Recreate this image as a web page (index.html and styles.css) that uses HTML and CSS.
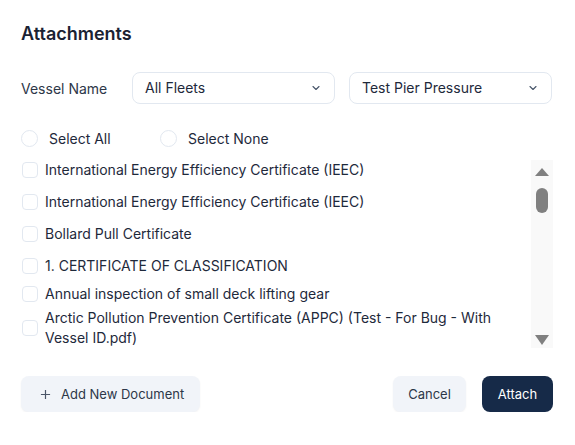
FILE: index.html
```html
<!DOCTYPE html>
<html lang="en">
<head>
  <meta charset="UTF-8" />
  <meta name="viewport" content="width=device-width, initial-scale=1.0">
  <title>Attachments</title>
  <link rel="stylesheet" href="styles.css">
</head>
<body>
  <div class="dialog">
    <h2 class="title">Attachments</h2>

    <div class="filter-row">
      <label class="filter-label">Vessel Name</label>
      <div class="select">
        <span>All Fleets</span>
        <svg class="chevron" viewBox="0 0 12 12"><path d="M3 4.5 6 7.5 9 4.5" /></svg>
      </div>
      <div class="select">
        <span>Test Pier Pressure</span>
        <svg class="chevron" viewBox="0 0 12 12"><path d="M3 4.5 6 7.5 9 4.5" /></svg>
      </div>
    </div>

    <div class="select-mode">
      <label class="radio"><span class="radio-dot"></span>Select All</label>
      <label class="radio"><span class="radio-dot"></span>Select None</label>
    </div>

    <div class="doc-list">
      <div class="doc-items">
        <label class="doc-row"><span class="box"></span><span>International Energy Efficiency Certificate (IEEC)</span></label>
        <label class="doc-row"><span class="box"></span><span>International Energy Efficiency Certificate (IEEC)</span></label>
        <label class="doc-row"><span class="box"></span><span>Bollard Pull Certificate</span></label>
        <label class="doc-row"><span class="box"></span><span>1. CERTIFICATE OF CLASSIFICATION</span></label>
        <label class="doc-row compact"><span class="box"></span><span>Annual inspection of small deck lifting gear</span></label>
        <label class="doc-row compact"><span class="box"></span><span>Arctic Pollution Prevention Certificate (APPC) (Test - For Bug - With Vessel ID.pdf)</span></label>
      </div>
      <div class="scrollbar">
        <span class="arrow up"></span>
        <span class="thumb"></span>
        <span class="track-fill"></span>
        <span class="arrow down"></span>
      </div>
    </div>

    <div class="actions">
      <button class="btn light add">
        <svg class="plus" viewBox="0 0 12 12"><path d="M6 1v10M1 6h10" /></svg>
        Add New Document
      </button>
      <div class="actions-right">
        <button class="btn light">Cancel</button>
        <button class="btn dark">Attach</button>
      </div>
    </div>
  </div>
</body>
</html>
```

FILE: styles.css
```css
* {
  margin: 0;
  padding: 0;
  box-sizing: border-box;
}

body {
  font-family: Inter, 'Noto Sans', sans-serif;
  background: #ffffff;
  color: #1e293b;
  font-size: 14px;
}

.dialog {
  width: 575px;
  padding: 22px 22px 0 21px;
}

.title {
  font-size: 18px;
  font-weight: 600;
  line-height: 24px;
  color: #1a2233;
  margin-bottom: 26px;
}

.filter-row {
  display: flex;
  align-items: center;
  gap: 14px;
}

.filter-label {
  width: 97px;
  color: #2d3748;
  font-size: 14px;
}

.select {
  width: 203px;
  height: 32px;
  border: 1px solid #e2e8f0;
  border-radius: 8px;
  display: flex;
  align-items: center;
  justify-content: space-between;
  padding: 0 12px 0 12px;
  color: #1e293b;
  line-height: 30px;
}

.chevron {
  width: 12px;
  height: 12px;
  fill: none;
  stroke: #475569;
  stroke-width: 1.1;
  stroke-linecap: round;
  stroke-linejoin: round;
}

.select-mode {
  display: flex;
  margin-top: 24px;
  height: 20px;
  align-items: center;
}

.radio {
  display: flex;
  align-items: center;
  gap: 11px;
  width: 139px;
  color: #1e293b;
}

.radio-dot {
  width: 17px;
  height: 17px;
  border: 1px solid #e2e8f0;
  border-radius: 50%;
}

.doc-list {
  display: flex;
  margin-top: 6px;
  height: 196px;
  overflow: hidden;
}

.doc-items {
  flex: 1;
}

.doc-row {
  display: flex;
  align-items: center;
  gap: 7px;
  padding: 6px 0;
  line-height: 20px;
  color: #1e293b;
}

.doc-row.compact {
  padding: 2px 0;
}

.box {
  flex: none;
  width: 16px;
  height: 16px;
  margin-left: 1px;
  border: 1px solid #e2e8f0;
  border-radius: 4px;
}

.scrollbar {
  width: 22px;
  margin-top: 6px;
  margin-bottom: 2px;
  background: #f9f9f9;
  display: flex;
  flex-direction: column;
  align-items: center;
  padding: 8px 0 3px;
}

.arrow {
  width: 0;
  height: 0;
  border-left: 7px solid transparent;
  border-right: 7px solid transparent;
}

.arrow.up {
  border-bottom: 8px solid #808080;
}

.arrow.down {
  border-top: 10px solid #808080;
}

.thumb {
  width: 12px;
  height: 25px;
  border-radius: 6px;
  background: #808080;
  margin-top: 12px;
}

.track-fill {
  flex: 1;
}

.actions {
  display: flex;
  justify-content: space-between;
  align-items: center;
  margin-top: 26px;
}

.actions-right {
  display: flex;
  gap: 16px;
}

.btn {
  height: 36px;
  border: none;
  border-radius: 8px;
  font-family: inherit;
  font-size: 13px;
  padding: 0 16px;
  display: flex;
  align-items: center;
  white-space: nowrap;
}

.btn.light {
  background: #f1f4f9;
  color: #2d3748;
  box-shadow: 0 1px 2px rgba(15, 23, 42, 0.06);
}

.btn.add {
  width: 179px;
  padding: 0 8px 0 19px;
  gap: 10px;
}

.plus {
  flex: none;
  width: 11px;
  height: 11px;
  fill: none;
  stroke: #4a5568;
  stroke-width: 1.3;
}

.btn.dark {
  background: #162a48;
  color: #ffffff;
  width: 71px;
  justify-content: center;
}

.btn.light:not(.add) {
  width: 73px;
  justify-content: center;
}
```
